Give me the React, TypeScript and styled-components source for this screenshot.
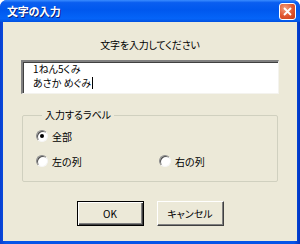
import React from 'react';
import styled, {createGlobalStyle} from 'styled-components';

const Global = createGlobalStyle`
  html, body { margin: 0; padding: 0; background: #fff; }
  body { font-family: "Noto Sans CJK JP", "Noto Sans", sans-serif; }
`;

const Window = styled.div`
  width: 300px;
  height: 244px;
  box-sizing: border-box;
  display: flex;
  flex-direction: column;
  padding: 0 3px 3px 3px;
  border-radius: 7px 7px 0 0;
  background: linear-gradient(90deg, #0a3fd0 0%, #0554e8 2%, #0554e8 98%, #0033c0 100%);
`;

const TitleBar = styled.div`
  height: 22px;
  margin: 0 -3px;
  padding: 0 4px 0 7px;
  display: flex;
  align-items: center;
  justify-content: space-between;
  border-radius: 7px 7px 0 0;
  background: linear-gradient(#3a8cff 0%, #0a5ef0 12%, #0058ee 45%, #0564f8 85%, #0050e0 100%);
`;

const Title = styled.span`
  color: #fff;
  font-size: 11px;
  font-weight: bold;
  letter-spacing: -0.3px;
  text-shadow: 1px 1px #0a1e7a;
`;

const CloseButton = styled.div`
  width: 15px;
  height: 15px;
  border: 1px solid #fff;
  border-radius: 3px;
  background: radial-gradient(circle at 35% 30%, #f3a07f 0%, #e0552e 55%, #c43c16 100%);
  display: flex;
  align-items: center;
  justify-content: center;
`;

const Body = styled.div`
  flex: 1;
  background: #ece9d8;
  display: flex;
  flex-direction: column;
  align-items: center;
  font-size: 10px;
  color: #000;
  font-feature-settings: "palt";
`;

const Prompt = styled.div`
  margin-top: 16px;
  height: 13px;
  line-height: 13px;
  letter-spacing: -0.2px;
`;

const TextBox = styled.div`
  margin-top: 9px;
  width: 258px;
  height: 34px;
  box-sizing: border-box;
  background: #fff;
  border-top: 2px solid #808080;
  border-left: 2px solid #808080;
  border-right: 1px solid #f4f3ee;
  border-bottom: 1px solid #f4f3ee;
  box-shadow: inset 1px 1px #404040;
  padding: 0 0 0 10px;
  line-height: 14px;
`;

const Caret = styled.span`
  display: inline-block;
  width: 1px;
  height: 12px;
  margin-left: 1px;
  background: #000;
  vertical-align: -2px;
`;

const Group = styled.fieldset`
  margin: 15px 0 0 0;
  width: 256px;
  height: 73px;
  box-sizing: border-box;
  border: 1px solid #d0d0bf;
  border-radius: 2px;
  padding: 0 0 0 13px;
`;

const Legend = styled.legend`
  padding: 0 3px;
  margin-left: 6px;
  line-height: 12px;
`;

const Options = styled.div`
  display: grid;
  grid-template-columns: 123px 1fr;
  grid-template-rows: 24px 26px;
  align-items: center;
  padding-top: 3px;
`;

const RadioRow = styled.label<{$wide?: boolean}>`
  display: flex;
  align-items: center;
  gap: 4px;
  grid-column: ${p => (p.$wide ? '1 / 3' : 'auto')};
`;

const RadioCircle = styled.span<{$on?: boolean}>`
  width: 10px;
  height: 10px;
  border-radius: 50%;
  background: #fff;
  border: 1px solid;
  border-color: #8a8a8a #f6f6f6 #f6f6f6 #8a8a8a;
  box-shadow: inset 1px 1px #505050;
  display: flex;
  align-items: center;
  justify-content: center;
  &::after {
    content: '';
    width: 4px;
    height: 4px;
    border-radius: 50%;
    background: ${p => (p.$on ? '#000' : 'transparent')};
  }
`;

const Buttons = styled.div`
  margin-top: 19px;
  display: flex;
  gap: 13px;
`;

const Button = styled.button<{$default?: boolean}>`
  width: 67px;
  height: 25px;
  box-sizing: border-box;
  background: #ece9d8;
  font-family: "Noto Sans CJK JP", "Noto Sans", sans-serif;
  font-size: 10px;
  font-feature-settings: "palt";
  color: #000;
  padding: 0;
  border: 1px solid ${p => (p.$default ? '#000' : '#fff')};
  border-right-color: ${p => (p.$default ? '#000' : '#404040')};
  border-bottom-color: ${p => (p.$default ? '#000' : '#404040')};
  box-shadow: ${p =>
    p.$default
      ? 'inset 1px 1px #fff, inset -1px -1px #404040, inset -2px -2px #808080'
      : 'inset -1px -1px #808080'};
`;

function App() {
  return (
    <Window>
      <Global/>
      <TitleBar>
        <Title>文字の入力</Title>
        <CloseButton>
          <svg width="9" height="9" viewBox="0 0 9 9">
            <path d="M1 1L8 8M8 1L1 8" stroke="#fff" strokeWidth="1.8"/>
          </svg>
        </CloseButton>
      </TitleBar>
      <Body>
        <Prompt>文字を入力してください</Prompt>
        <TextBox>
          1ねん5くみ<br/>
          あさか めぐみ<Caret/>
        </TextBox>
        <Group>
          <Legend>入力するラベル</Legend>
          <Options>
            <RadioRow $wide><RadioCircle $on/>全部</RadioRow>
            <RadioRow><RadioCircle/>左の列</RadioRow>
            <RadioRow><RadioCircle/>右の列</RadioRow>
          </Options>
        </Group>
        <Buttons>
          <Button $default>OK</Button>
          <Button>キャンセル</Button>
        </Buttons>
      </Body>
    </Window>
  );
}

export default App;
